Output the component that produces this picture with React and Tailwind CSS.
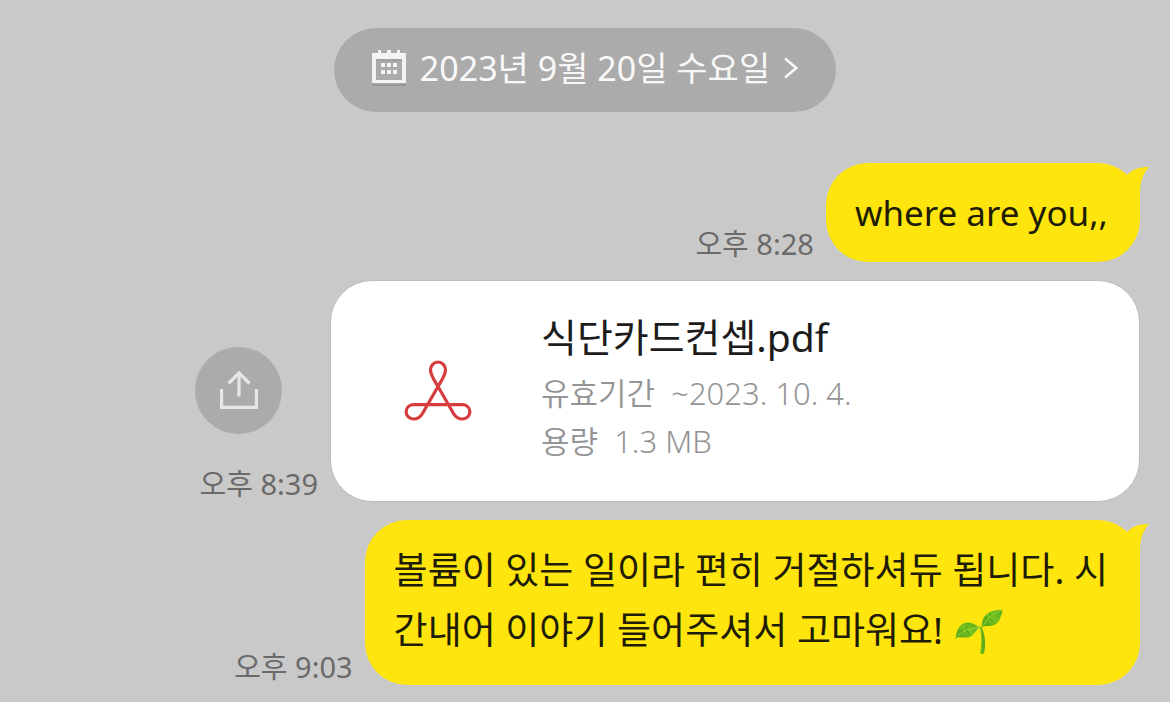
const CalendarIcon = () => (
  <svg width="34" height="36" viewBox="0 0 34 36" aria-hidden="true">
    <path d="M0 34h34v2H0z" fill="#989898" />
    <path
      d="M0 3h6V0h3v3h6V0h4v3h6V0h3v3h6v30H0zM4 9v21h26V9z"
      fill="#f3f3f3"
      fillRule="evenodd"
    />
    <path d="M4 9h26v2H4z" fill="#a0a0a0" />
    <path
      d="M9 13h4v4H9zM15 13h4v4h-4zM21 13h4v4h-4zM9 20h4v4H9zM15 20h4v4h-4zM21 20h4v4h-4z"
      fill="#f3f3f3"
    />
  </svg>
)

const ChevronIcon = () => (
  <svg width="14" height="22" viewBox="0 0 14 22" fill="none" stroke="#f8f8f8" strokeWidth="2.4" aria-hidden="true">
    <path d="M1 1.500 12.300 11 1 20.500" />
  </svg>
)

const ShareIcon = () => (
  <svg width="38" height="40" viewBox="0 0 38 40" fill="none" stroke="#e6e6e6" strokeWidth="3.2" aria-hidden="true">
    <path d="M1.600 18v18.400h34.800V18" />
    <path d="M19 25.500V2" />
    <path d="M8.500 12.500 19 1.900l10.500 10.600" />
  </svg>
)

const PdfIcon = () => (
  <svg
    width="68"
    height="62"
    viewBox="0 0 68 62"
    fill="none"
    stroke="#d63b3d"
    strokeWidth="3.2"
    strokeLinejoin="round"
    aria-hidden="true"
  >
    <path d="M34 26.500C30 20 26.500 15 26.500 10a7.500 8 0 0 1 15 0C41.500 15 38 20 34 26.500L18.500 53.500C16 57.800 13 59 9.500 59a7.200 7.200 0 0 1-7.400-7.200C2.100 47.500 5.500 44.700 10 44.700h48c4.500 0 7.900 2.800 7.900 7.100a7.200 7.200 0 0 1-7.400 7.200c-3.500 0-6.500-1.200-9-5.500z" />
  </svg>
)

const SproutIcon = () => (
  <svg width="48" height="49" viewBox="0 -3 48 49" role="img" aria-label="새싹">
    <defs>
      <linearGradient id="leaf" x1="0" y1="1" x2="1" y2="0">
        <stop offset="0" stopColor="#4a9a18" />
        <stop offset="0.5" stopColor="#78c41f" />
        <stop offset="1" stopColor="#55aa1c" />
      </linearGradient>
      <linearGradient id="stem" x1="0" y1="0" x2="1" y2="0">
        <stop offset="0" stopColor="#86d024" />
        <stop offset="1" stopColor="#4b9a18" />
      </linearGradient>
    </defs>
    <path d="M26 17c4 7 5 18 3 27-.8 1.300-3.400 1.200-3.800 0 1.300-7.500 2-18-.7-25.500z" fill="url(#stem)" />
    <path d="M.5 30C1.500 18 7 12.500 14.500 13.500c5 .8 7 4.500 12 4.500-5 .5-6.500 8.500-12.500 10.300C8 29.500 4 26.500.5 30z" fill="url(#leaf)" />
    <path d="M27 18.500C26 7 33 .8 47.500.8 45.500 12 42 17.500 33 17c-3.500 0-5 .4-6 1.500z" fill="url(#leaf)" />
    <path d="M1 29c6-7 12-9.500 24-10.500M28 17.500C32 9.500 38 4 47 1" fill="none" stroke="#a5dc43" strokeWidth="0.9" />
    <path d="M6 24.500l1.500-5M11 22l1-5M12 21.500l2 4M32 11.500l-1-4M36 7.500l-1-3.500M34 9.500l5 2.500" fill="none" stroke="#3f8a16" strokeWidth="0.6" />
  </svg>
)

const BubbleTail = () => (
  <svg className="absolute top-[3px] -right-[9px]" width="24" height="40" viewBox="0 0 24 40" aria-hidden="true">
    <path d="M2 9C8 3 14 1 24 1c-5.500 6-9 14-9 27v11H6z" fill="#fee50d" />
  </svg>
)

const Time = ({ children }) => (
  <time className="text-[29px] leading-9 text-[#6a6a6a] whitespace-nowrap">{children}</time>
)

const Bubble = ({ time, children }) => (
  <div className="flex items-end justify-end gap-3">
    <Time>{time}</Time>
    <div className="relative rounded-[42px] bg-[#fee50d] pr-8 pl-[29px] text-[#1f1c05]">
      <BubbleTail />
      {children}
    </div>
  </div>
)

const FileMessage = ({ time, name, expires, size }) => (
  <div className="flex items-end justify-end gap-3">
    <div className="flex flex-col items-end">
      <button
        aria-label="공유"
        className="mr-9 mb-8 flex h-[87px] w-[87px] items-center justify-center rounded-full bg-[#ababab]"
      >
        <ShareIcon />
      </button>
      <Time>{time}</Time>
    </div>
    <div className="flex w-[810px] items-center rounded-[42px] border border-[#bdbdbd] bg-white pt-7 pb-9">
      <div className="flex w-[210px] shrink-0 justify-center pt-2 pl-1">
        <PdfIcon />
      </div>
      <div>
        <p className="mb-1 text-[39px] leading-[56px] text-[#1c1c1c]">{name}</p>
        <p className="text-[31px] leading-[48px] font-[350] whitespace-pre text-[#949494]">유효기간  {expires}</p>
        <p className="text-[31px] leading-[48px] font-[350] whitespace-pre text-[#949494]">용량  {size}</p>
      </div>
    </div>
  </div>
)

export default function App() {
  return (
    <main className="min-h-screen bg-[#c9c9c9] pt-7 pr-[30px] pb-4 font-['Noto_Sans','Noto_Sans_CJK_KR',sans-serif]">
      <div className="-mr-[30px] flex justify-center">
        <button className="flex h-[84px] items-center gap-[14px] rounded-full bg-[#ababab] px-[38px] pb-1 text-[34px] text-[#f8f8f8]">
          <CalendarIcon />
          <span>2023년 9월 20일 수요일</span>
          <ChevronIcon />
        </button>
      </div>

      <div className="mt-[51px] flex flex-col gap-[18px]">
        <Bubble time="오후 8:28">
          <p className="py-5 text-[35px] leading-[59px]">where are you,,</p>
        </Bubble>

        <FileMessage time="오후 8:39" name="식단카드컨셉.pdf" expires="~2023. 10. 4." size="1.3 MB" />

        <Bubble time="오후 9:03">
          <p className="pt-5 pb-[25px] text-[37px] leading-[60px]">
            볼륨이 있는 일이라 편히 거절하셔듀 됩니다. 시
            <br />
            <span className="flex items-center gap-3">
              간내어 이야기 들어주셔서 고마워요!
              <SproutIcon />
            </span>
          </p>
        </Bubble>
      </div>
    </main>
  )
}
